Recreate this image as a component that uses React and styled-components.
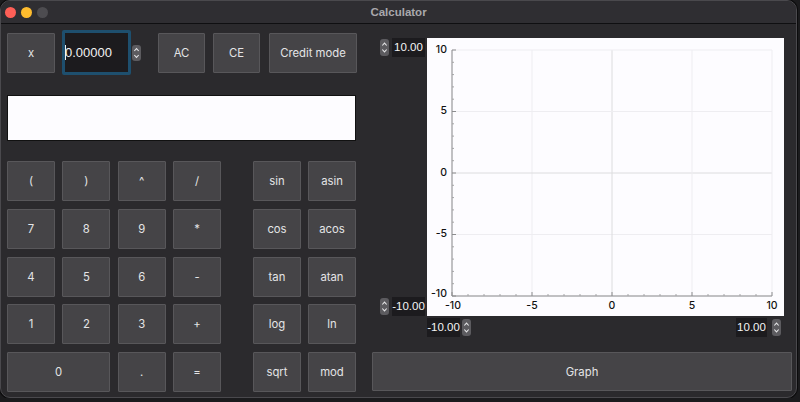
import React from 'react';
import styled, { createGlobalStyle } from 'styled-components';

const GlobalStyle = createGlobalStyle`
  html, body {
    margin: 0;
    padding: 0;
    background: #1b1b1d;
  }
  body {
    font-family: Inter, "Liberation Sans", sans-serif;
  }
`;

const leftKeys = [
    '(', ')', '^', '/',
    '7', '8', '9', '*',
    '4', '5', '6', '-',
    '1', '2', '3', '+',
];
const funcKeys = ['sin', 'asin', 'cos', 'acos', 'tan', 'atan', 'log', 'ln', 'sqrt', 'mod'];

function Stepper({ height = 17 }) {
    const mid = height / 2;
    return (
        <StepperBox width="9" height={height} viewBox={`0 0 9 ${height}`}>
            <rect x="0" y="0" width="9" height={height} rx="3" fill="#5c5b5f" />
            <path d={`M2.3 ${mid - 2} L4.5 ${mid - 4.4} L6.7 ${mid - 2}`} stroke="#e4e4e6" strokeWidth="1.1" fill="none" />
            <path d={`M2.3 ${mid + 2} L4.5 ${mid + 4.4} L6.7 ${mid + 2}`} stroke="#e4e4e6" strokeWidth="1.1" fill="none" />
        </StepperBox>
    );
}

function SpinBox({ value, arrows = 'left', fieldWidth = 33, gap = 3 }) {
    return (
        <Spin $gap={gap}>
            {arrows === 'left' && <Stepper />}
            <SpinField $w={fieldWidth}>{value}</SpinField>
            {arrows === 'right' && <Stepper />}
        </Spin>
    );
}

const X = (v) => 25 + (v + 10) * 16;
const Y = (v) => 12 + (10 - v) * 12.3;
const majors = [-10, -5, 0, 5, 10];
const minors = Array.from({ length: 21 }, (_, i) => i - 10).filter((v) => v % 5 !== 0);

function Plot() {
    return (
        <svg width="357" height="278" viewBox="0 0 357 278">
            <rect width="357" height="278" fill="#fdfcff" />
            {majors.map((v) => (
                <g key={'g' + v}>
                    <line x1={X(v)} y1={Y(10)} x2={X(v)} y2={Y(-10)} stroke={v === 0 ? '#dcdcde' : '#eeedf1'} />
                    <line x1={X(-10)} y1={Y(v)} x2={X(10)} y2={Y(v)} stroke={v === 0 ? '#dcdcde' : '#eeedf1'} />
                </g>
            ))}
            <line x1="25" y1={Y(10)} x2="25" y2={Y(-10)} stroke="#8c8c8e" />
            <line x1="25" y1={Y(-10)} x2={X(10)} y2={Y(-10)} stroke="#8c8c8e" />
            {majors.map((v) => (
                <g key={'t' + v}>
                    <line x1="25" y1={Y(v)} x2="29" y2={Y(v)} stroke="#8c8c8e" />
                    <line x1={X(v)} y1={Y(-10)} x2={X(v)} y2={Y(-10) - 4} stroke="#8c8c8e" />
                </g>
            ))}
            {minors.map((v) => (
                <g key={'m' + v}>
                    <line x1="25" y1={Y(v)} x2="27" y2={Y(v)} stroke="#a4a4a6" />
                    <line x1={X(v)} y1={Y(-10)} x2={X(v)} y2={Y(-10) - 2} stroke="#a4a4a6" />
                </g>
            ))}
            {majors.map((v) => (
                <PlotLabel key={'yl' + v} x="20" y={Y(v) + (v === -10 ? -2 : 0)} textAnchor="end" dominantBaseline="middle">
                    {v}
                </PlotLabel>
            ))}
            {majors.map((v) => (
                <PlotLabel key={'xl' + v} x={X(v) + (v === -10 ? 1 : 0)} y={Y(-10) + 10} textAnchor="middle" dominantBaseline="middle">
                    {v}
                </PlotLabel>
            ))}
        </svg>
    );
}

function App() {
    return (
        <>
            <GlobalStyle />
            <Window>
                <TitleBar>
                    <Lights>
                        <Light $c="#fe5f57" />
                        <Light $c="#febc2e" />
                        <Light $c="#4d4c50" />
                    </Lights>
                    <Title>Calculator</Title>
                    <span />
                </TitleBar>

                <Body>
                    <LeftPanel>
                        <TopRow>
                            <Key $w={48} $h={40}>x</Key>
                            <InputWrap>
                                <NumInput>0.00000</NumInput>
                                <Stepper height={16} />
                            </InputWrap>
                            <Key $w={47} $h={40} $ml={17}>AC</Key>
                            <Key $w={47} $h={40} $ml={8}>CE</Key>
                            <Key $w={88} $h={40} $ml={9}>Credit mode</Key>
                        </TopRow>

                        <Display />

                        <KeyArea>
                            <KeyGrid $cols={4} $gap={7.33}>
                                {leftKeys.map((k) => <Key key={k}>{k}</Key>)}
                                <Key $span={2}>0</Key>
                                <Key>.</Key>
                                <Key>=</Key>
                            </KeyGrid>
                            <KeyGrid $cols={2} $gap={7}>
                                {funcKeys.map((k) => <Key key={k}>{k}</Key>)}
                            </KeyGrid>
                        </KeyArea>
                    </LeftPanel>

                    <RightPanel>
                        <PlotRow>
                            <YSpins>
                                <SpinBox value="10.00" />
                                <SpinBox value="-10.00" />
                            </YSpins>
                            <PlotBox>
                                <Plot />
                            </PlotBox>
                        </PlotRow>
                        <XSpins>
                            <SpinBox value="-10.00" arrows="right" gap={2} />
                            <SpinBox value="10.00" arrows="right" gap={5} fieldWidth={31} />
                        </XSpins>
                        <GraphButton>Graph</GraphButton>
                    </RightPanel>
                </Body>
            </Window>
        </>
    );
}

const Window = styled.div`
  width: 797px;
  height: 398px;
  box-sizing: border-box;
  border: 1px solid #4a494d;
  border-radius: 10px;
  background: #2b2a2d;
  overflow: hidden;
  display: flex;
  flex-direction: column;
  box-shadow: 0 0 0 1px #0c0c0d;
`;
const TitleBar = styled.div`
  height: 22px;
  flex: none;
  display: grid;
  grid-template-columns: 1fr auto 1fr;
  align-items: center;
  background: #2f2e32;
  border-bottom: 1px solid #0f0f11;
`;
const Lights = styled.div`
  display: flex;
  gap: 5px;
  padding-left: 4px;
`;
const Light = styled.div`
  width: 11px;
  height: 11px;
  border-radius: 50%;
  background: ${(p) => p.$c};
`;
const Title = styled.div`
  font-family: "Liberation Sans", Arial, sans-serif;
  font-size: 11.5px;
  font-weight: 700;
  color: #a9a8ac;
`;
const Body = styled.div`
  display: flex;
  gap: 15px;
  padding: 6px 0 0 6px;
`;
const LeftPanel = styled.div`
  width: 350px;
  display: flex;
  flex-direction: column;
`;
const TopRow = styled.div`
  height: 45px;
  display: flex;
  align-items: center;
`;
const Key = styled.button`
  box-sizing: border-box;
  width: ${(p) => (p.$w ? p.$w + 'px' : 'auto')};
  height: ${(p) => (p.$h ? p.$h + 'px' : '40px')};
  margin-left: ${(p) => (p.$ml || 0)}px;
  grid-column: ${(p) => (p.$span ? `span ${p.$span}` : 'auto')};
  background: #454447;
  border: 1px solid #58575a;
  border-radius: 1px;
  color: #e4e4e6;
  font-family: Inter, "Liberation Sans", sans-serif;
  font-size: 11.3px;
  padding: 0;
  display: flex;
  align-items: center;
  justify-content: center;
`;
const InputWrap = styled.div`
  display: flex;
  align-items: center;
  gap: 1px;
  margin-left: 7px;
`;
const NumInput = styled.div`
  box-sizing: border-box;
  width: 69px;
  height: 45px;
  border: 3px solid #1e4f6e;
  border-radius: 2px;
  background: #1c1b1e;
  color: #f2f2f2;
  font-family: "Liberation Sans", Arial, sans-serif;
  font-size: 13px;
  display: flex;
  align-items: center;
  padding-left: 0;
  &::before {
    content: '';
    width: 1px;
    height: 15px;
    background: #f2f2f2;
    margin-right: -1px;
  }
`;
const StepperBox = styled.svg`
  display: block;
  flex: none;
`;
const Display = styled.div`
  box-sizing: border-box;
  width: 349px;
  height: 46px;
  margin-top: 20px;
  background: #fdfcff;
  border: 1px solid #111;
`;
const KeyArea = styled.div`
  display: flex;
  gap: 32px;
  margin-top: 20px;
`;
const KeyGrid = styled.div`
  display: grid;
  grid-template-columns: repeat(${(p) => p.$cols}, 48px);
  grid-auto-rows: 40px;
  column-gap: ${(p) => p.$gap}px;
  row-gap: 7.75px;
`;
const RightPanel = styled.div`
  width: 420px;
  display: flex;
  flex-direction: column;
  margin-top: 8px;
`;
const PlotRow = styled.div`
  display: flex;
`;
const YSpins = styled.div`
  width: 47px;
  padding-left: 8px;
  height: 278px;
  display: flex;
  flex-direction: column;
  justify-content: space-between;
`;
const Spin = styled.div`
  display: flex;
  align-items: center;
  gap: ${(p) => p.$gap}px;
  height: 19px;
`;
const SpinField = styled.div`
  width: ${(p) => p.$w}px;
  height: 19px;
  background: #1c1b1e;
  color: #f4f4f4;
  font-family: "Liberation Sans", Arial, sans-serif;
  font-size: 11.5px;
  line-height: 19px;
  text-align: center;
  white-space: nowrap;
`;
const PlotBox = styled.div`
  width: 357px;
  height: 278px;
  line-height: 0;
`;
const PlotLabel = styled.text`
  font-family: Inter, "Liberation Sans", sans-serif;
  font-size: 10.5px;
  font-weight: 500;
  fill: #111;
`;
const XSpins = styled.div`
  display: flex;
  justify-content: space-between;
  width: 354px;
  margin: 2px 0 0 55px;
`;
const GraphButton = styled(Key)`
  width: 420px;
  height: 39px;
  margin-top: 15px;
`;

export default App;
